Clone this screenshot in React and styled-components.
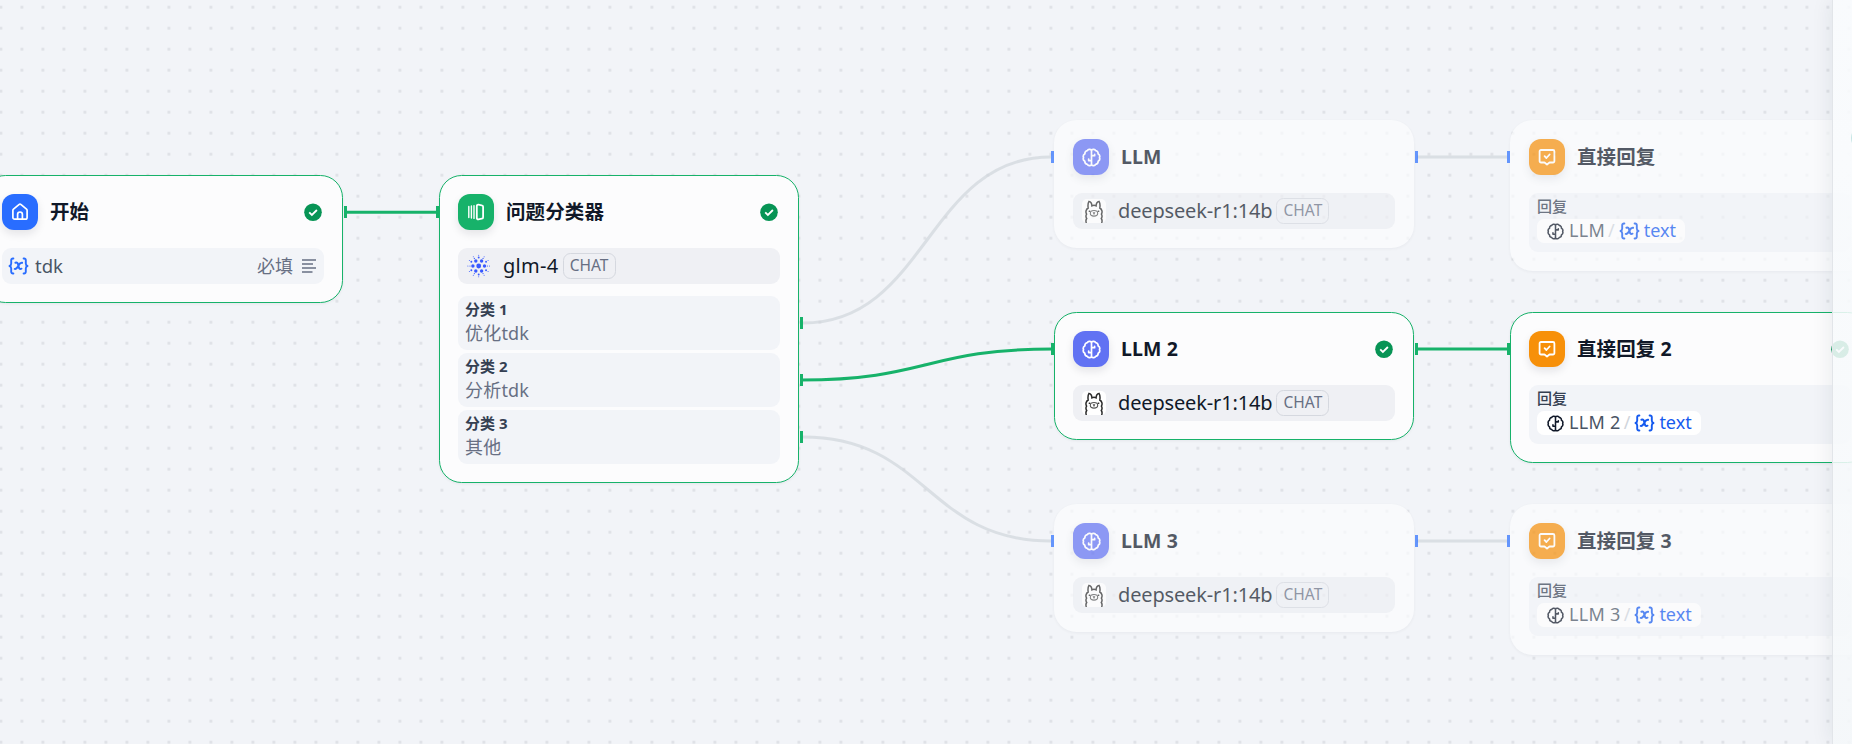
import React from 'react';
import styled, { createGlobalStyle } from 'styled-components';

const GlobalStyle = createGlobalStyle`
  * {
    box-sizing: border-box;
  }
  body {
    margin: 0;
    overflow: hidden;
    font-family: 'Noto Sans', 'Noto Sans CJK SC', sans-serif;
    color: #101828;
  }
`;

const Canvas = styled.main`
  position: relative;
  width: 1852px;
  height: 744px;
  overflow: hidden;
  background-color: #f2f4f8;
  background-image: radial-gradient(
    circle at 10.5px 10.5px,
    rgba(16, 24, 40, 0.085) 1.2px,
    transparent 2px
  );
  background-size: 21px 21px;
  background-position: -9.6px -3.3px;
`;

const EdgeLayer = styled.svg`
  position: absolute;
  inset: 0;
  path {
    fill: none;
    stroke: #d0d5dc;
    stroke-opacity: 0.7;
    stroke-width: 3;
    &.done {
      stroke: #17b26a;
      stroke-opacity: 1;
    }
  }
`;

const NodeCard = styled.section`
  position: absolute;
  left: ${p => p.$x}px;
  top: ${p => p.$y}px;
  width: 360px;
  padding: 18px;
  border: 1px solid ${p => (p.$done ? '#17b26a' : 'transparent')};
  border-radius: 22.5px;
  background-color: ${p => (p.$done ? '#fcfcfd' : '#fcfdfe')};
  box-shadow: 0 1px 3px rgba(16, 24, 40, 0.06);
  opacity: ${p => (p.$done ? 1 : 0.7)};
`;

const NodeHeader = styled.header`
  display: flex;
  align-items: center;
  height: 36px;
  margin-bottom: 18px;
  padding-right: 2px;
`;

const NodeIcon = styled.span`
  display: flex;
  align-items: center;
  justify-content: center;
  width: 36px;
  height: 36px;
  margin-right: 12px;
  border-radius: 12px;
  color: #fff;
  background-color: ${p => p.$color};
  box-shadow: 0 4px 8px rgba(16, 24, 40, 0.1);
`;

const NodeTitle = styled.h3`
  flex: 1;
  margin: 0;
  font-size: 19.5px;
  line-height: 30px;
  letter-spacing: 0.1px;
  font-weight: 700;
  white-space: nowrap;
`;

const Handle = styled.i`
  position: absolute;
  top: ${p => p.$top}px;
  ${p => (p.$side === 'left' ? 'left: -4px;' : 'right: -5px;')}
  width: 3px;
  height: 12px;
  background-color: ${p => (p.$done ? '#17b26a' : '#296dff')};
`;

const Row = styled.div`
  display: flex;
  align-items: center;
  height: 36px;
  padding: ${p => (p.$model ? '0 9px' : '0 8px 0 6px')};
  border-radius: 9px;
  line-height: 24px;
  background-color: ${p => (p.$model ? '#eff0f4' : '#f2f4f8')};
`;

const VarName = styled.span`
  flex: 1;
  margin: -1px 0 0 6px;
  font-size: 18.5px;
  color: #495464;
`;

const Required = styled.span`
  margin: -1px 9px 0 0;
  font-size: 18px;
  color: #676f83;
`;

const ModelName = styled.span`
  margin: -1px 0 0 12px;
  font-size: 20px;
  letter-spacing: ${p => (p.$wide ? '0.3px' : '-0.15px')};
`;

const ModelTag = styled.span`
  width: 53px;
  height: 26px;
  margin-left: 4px;
  border: 1px solid #d5d8df;
  border-radius: 7.5px;
  font-size: 15.5px;
  line-height: 23px;
  text-align: center;
  color: #676f83;
`;

const LlamaBox = styled.span`
  width: 24px;
  height: 24px;
  border-radius: 5px;
  background-color: #fff;
`;

const ClassList = styled.div`
  display: grid;
  gap: 3px;
  margin-top: 12px;
`;

const ClassItem = styled.div`
  height: 54px;
  padding: 1px 7px;
  border-radius: 9px;
  background-color: #f2f4f8;
`;

const ClassLabel = styled.div`
  font-size: 15px;
  line-height: 24px;
  font-weight: 700;
  color: #354052;
`;

const ClassText = styled.div`
  font-size: 18px;
  line-height: 25px;
  letter-spacing: 0.2px;
  color: #676f83;
`;

const AnswerBox = styled.div`
  height: 59px;
  padding: 2px 8px;
  border-radius: 9px;
  background-color: #f2f4f8;
`;

const AnswerLabel = styled.div`
  height: 24px;
  font-size: 15px;
  line-height: 22px;
  font-weight: 500;
  color: #354052;
`;

const VarPill = styled.span`
  display: inline-flex;
  align-items: center;
  height: 24px;
  padding: 0 9px 0 10px;
  border-radius: 7px;
  background-color: #fff;
  font-size: 18px;
  line-height: 24px;
  vertical-align: top;
  span {
    margin-top: -2px;
  }
  .node {
    margin-left: 5px;
    letter-spacing: 0.3px;
    color: #495464;
  }
  .slash {
    margin-left: 3px;
    margin-right: 4px;
    color: #d0d5dc;
  }
  .var {
    margin-left: 4px;
    color: #155aef;
  }
`;

const SidePanel = styled.aside`
  position: absolute;
  top: 0;
  right: 0;
  width: 20px;
  height: 744px;
  border-left: 1px solid #e2e5e9;
  background-image: linear-gradient(rgba(250, 252, 254, 0.87), rgba(245, 248, 250, 0.87));
  box-shadow: -2px 0 20px rgba(9, 40, 50, 0.08);
`;

// only the rim of the status ring reaches into view
const PanelRing = styled.i`
  position: absolute;
  top: 125px;
  left: 18px;
  width: 26px;
  height: 26px;
  border-radius: 50%;
  background-color: #c5e5e4;
`;

function HomeIcon() {
  return (
    <svg width="18" height="18" viewBox="0 0 18 18" fill="none" stroke="currentColor" strokeWidth="1.7" strokeLinejoin="round">
      <path d="M1.9 7.3a1.6 1.6 0 0 1 .6-1.2l5.4-4.5a1.7 1.7 0 0 1 2.2 0l5.4 4.5a1.6 1.6 0 0 1 .6 1.2v7.1a1.7 1.7 0 0 1-1.7 1.7H3.6a1.7 1.7 0 0 1-1.7-1.7z" />
      <path d="M6.6 16v-4.6a2.4 2.4 0 0 1 4.8 0V16" />
    </svg>
  );
}

function ClassifierIcon() {
  return (
    <svg width="18" height="18" viewBox="0 0 18 18" fill="none" stroke="currentColor" strokeLinecap="round" strokeLinejoin="round">
      <path d="M1.8 3.4v11.2M4.4 3v12M7 2.6v12.8" strokeWidth="1.4" />
      <path d="M9.8 3a1.3 1.3 0 0 1 1.5-1.3l3.5.6a1.5 1.5 0 0 1 1.3 1.5v10.4a1.5 1.5 0 0 1-1.3 1.5l-3.5.6A1.3 1.3 0 0 1 9.8 15z" strokeWidth="1.8" />
    </svg>
  );
}

function BrainIcon({ size }) {
  return (
    <svg width={size} height={size} viewBox="0 0 20 20" fill="none" stroke="currentColor" strokeWidth="1.8" strokeLinecap="round" strokeLinejoin="round">
      <path d="M10 2C8.6.9 6.4 1.3 5.6 2.8 3.9 3 2.8 4.5 3.1 6.1 1.6 7 1 8.7 1.6 10 1 11.5 1.5 13.1 3 13.9 2.9 15.5 4 16.9 5.6 17.2 6.5 18.7 8.6 19.1 10 18" />
      <path d="M10 2C11.4.9 13.6 1.3 14.4 2.8 16.1 3 17.2 4.5 16.9 6.1 18.4 7 19 8.7 18.4 10 19 11.5 18.5 13.1 17 13.9 17.1 15.5 16 16.9 14.4 17.2 13.5 18.7 11.4 19.1 10 18" />
      <path d="M10 2v16M10 8.1h3.300M13.300 8v-1.200M10 13.200H7M7 13.200v-1.600" />
    </svg>
  );
}

function AnswerIcon() {
  return (
    <svg width="18" height="18" viewBox="0 0 18 18" fill="none" stroke="currentColor" strokeWidth="1.8" strokeLinecap="round" strokeLinejoin="round">
      <path d="M3 2h12a1.4 1.4 0 0 1 1.4 1.4v9.7a1.4 1.4 0 0 1-1.4 1.4h-3.5L9 16.5l-2.5-2H3a1.4 1.4 0 0 1-1.4-1.4V3.4A1.4 1.4 0 0 1 3 2z" />
      <path d="M6.6 8.200l1.800 1.800 3.200-3.500" />
    </svg>
  );
}

function VarIcon({ color = '#296dff' }) {
  return (
    <svg width="21" height="18" viewBox="0 0 21 18" fill="none" stroke={color} strokeWidth="1.9" strokeLinecap="round" strokeLinejoin="round">
      <path d="M5.4 1.5h-.5a1.7 1.7 0 0 0-1.7 1.7v3.3c0 1.2-.7 2.2-1.7 2.5 1 .3 1.7 1.3 1.7 2.5v3.3a1.7 1.7 0 0 0 1.7 1.7h.5" />
      <path d="M15.6 1.5h.5a1.7 1.7 0 0 1 1.7 1.7v3.3c0 1.2.7 2.2 1.7 2.5-1 .3-1.7 1.3-1.7 2.5v3.3a1.7 1.7 0 0 1-1.7 1.7h-.5" />
      <path d="M7.4 5.700c1.800-.6 2.500.3 2.900 2.500.5 2.800 1.100 4.500 3.200 3.500M14.100 5.800c-1.800-.3-2.600.9-3.700 2.900-1.200 2.200-2 3.600-3.700 3.200" strokeWidth="2" />
    </svg>
  );
}

function CheckBadge() {
  return (
    <svg width="18" height="18" viewBox="0 0 18 18" fill="none">
      <circle cx="9" cy="9.2" r="8.8" fill="#079455" />
      <path d="M5.2 9.3l2.7 2.7 5-5" stroke="#fff" strokeWidth="1.8" />
    </svg>
  );
}

function ParagraphIcon() {
  return (
    <svg width="14" height="14" viewBox="0 0 14 14" stroke="#676f83" strokeWidth="1.3">
      <path d="M0 1h14M0 5h11M0 9h14M0 13h10.5" />
    </svg>
  );
}

const ring = (count, dist, r, offset) =>
  Array.from({ length: count }, (_, i) => {
    const a = ((offset + (360 / count) * i) * Math.PI) / 180;
    return { x: 11.7 + dist * Math.cos(a), y: 12 + dist * Math.sin(a), r };
  });

const GLM_DOTS = [
  { x: 11.7, y: 12, r: 2.4 },
  ...ring(6, 5.8, 1.7, 0),
  ...ring(6, 8.5, 0.95, 30),
  ...ring(6, 8.7, 0.6, 0),
  ...ring(6, 10.8, 0.5, 30),
  ...ring(6, 10.8, 0.5, 0)
];

function GlmIcon() {
  return (
    <svg width="24" height="24" viewBox="0 0 24 24" fill="#3859ff">
      {GLM_DOTS.map((d, i) => (
        <circle key={i} cx={d.x} cy={d.y} r={d.r} />
      ))}
    </svg>
  );
}

function LlamaIcon() {
  return (
    <LlamaBox>
      <svg width="24" height="24" viewBox="0 0 24 24" fill="none" stroke="#2b2b2b" strokeWidth="1.5" strokeLinecap="round">
        <path d="M4.2 23.5c-.5-1.6-.3-2.9.5-4-.9-1.4-1-2.9-.1-4.3-1.3-2.2-.6-5 1.6-6.2-.4-2.5-.3-5 .8-6.6 1.800.3 2.800 2.400 2.900 4.400 1.300-.8 2.900-.8 4.200 0 .1-2 1.100-4.100 2.900-4.400 1.100 1.600 1.200 4.100.8 6.600 2.200 1.200 2.900 4 1.600 6.200.9 1.400.8 2.900-.1 4.300.8 1.100 1 2.400.5 4" />
        <ellipse cx="12" cy="14.3" rx="3.7" ry="2.8" strokeWidth="1.1" stroke="#555" />
        <path d="M11.2 13.7l.8.5.8-.5M12 14.2v1" strokeWidth="0.9" />
        <path d="M7.3 12.2h.4M16.3 12.2h.4" />
      </svg>
    </LlamaBox>
  );
}

function Node({ x, y, title, icon, color, done, left, right = [], children }) {
  return (
    <NodeCard $x={x} $y={y} $done={done}>
      {left && <Handle $side="left" $top={30} $done={done} />}
      {right.map(top => (
        <Handle key={top} $side="right" $top={top} $done={done} />
      ))}
      <NodeHeader>
        <NodeIcon $color={color}>{icon}</NodeIcon>
        <NodeTitle>{title}</NodeTitle>
        {done && <CheckBadge />}
      </NodeHeader>
      {children}
    </NodeCard>
  );
}

function ModelRow({ icon, name, wide }) {
  return (
    <Row $model>
      {icon}
      <ModelName $wide={wide}>{name}</ModelName>
      <ModelTag>CHAT</ModelTag>
    </Row>
  );
}

const BRANCHES = [
  { y: 120, llm: 'LLM', answer: '直接回复' },
  { y: 312, llm: 'LLM 2', answer: '直接回复 2', done: true },
  { y: 504, llm: 'LLM 3', answer: '直接回复 3' }
];

const CLASSES = ['优化tdk', '分析tdk', '其他'];

export default function App() {
  return (
    <>
      <GlobalStyle />
      <Canvas>
        <EdgeLayer width="1852" height="744">
          <path className="done" d="M345 212.3H438" />
          <path d="M803 323C927 323 927 157 1051 157" />
          <path d="M803 437C927 437 927 541 1051 541" />
          <path className="done" d="M801 380C927 380 927 349 1053 349" />
          <path d="M1417 157H1507" />
          <path className="done" d="M1416 349H1509" />
          <path d="M1417 541H1507" />
        </EdgeLayer>
        <Node x={-17} y={175} title="开始" icon={<HomeIcon />} color="#296dff" done right={[30]}>
          <Row>
            <VarIcon />
            <VarName>tdk</VarName>
            <Required>必填</Required>
            <ParagraphIcon />
          </Row>
        </Node>
        <Node
          x={439}
          y={175}
          title="问题分类器"
          icon={<ClassifierIcon />}
          color="#17b26a"
          done
          left
          right={[141, 198, 255]}
        >
          <ModelRow icon={<GlmIcon />} name="glm-4" wide />
          <ClassList>
            {CLASSES.map((text, i) => (
              <ClassItem key={text}>
                <ClassLabel>分类 {i + 1}</ClassLabel>
                <ClassText>{text}</ClassText>
              </ClassItem>
            ))}
          </ClassList>
        </Node>
        {BRANCHES.map(({ y, llm, answer, done }) => (
          <React.Fragment key={llm}>
            <Node
              x={1054}
              y={y}
              title={llm}
              icon={<BrainIcon size={19} />}
              color="#6172f3"
              done={done}
              left
              right={[30]}
            >
              <ModelRow icon={<LlamaIcon />} name="deepseek-r1:14b" />
            </Node>
            <Node x={1510} y={y} title={answer} icon={<AnswerIcon />} color="#f79009" done={done} left>
              <AnswerBox>
                <AnswerLabel>回复</AnswerLabel>
                <VarPill>
                  <BrainIcon size={17} />
                  <span className="node">{llm}</span>
                  <span className="slash">/</span>
                  <VarIcon color="#155aef" />
                  <span className="var">text</span>
                </VarPill>
              </AnswerBox>
            </Node>
          </React.Fragment>
        ))}
        <SidePanel>
          <PanelRing />
        </SidePanel>
      </Canvas>
    </>
  );
}
